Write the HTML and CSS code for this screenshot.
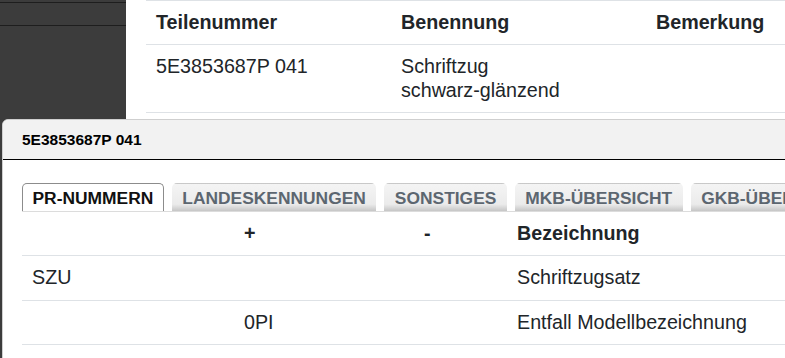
FILE: index.html
```html
<!DOCTYPE html>
<html lang="de">
<head>
<meta charset="utf-8">
<title>Teile</title>
<link rel="stylesheet" href="styles.css">
</head>
<body>
<div class="page">
  <aside class="sidebar">
    <div class="sb-bar"></div>
  </aside>
  <main class="content">
    <table class="parts">
      <colgroup><col class="c1"><col class="c2"><col class="c3"></colgroup>
      <thead>
        <tr><th>Teilenummer</th><th>Benennung</th><th>Bemerkung</th></tr>
      </thead>
      <tbody>
        <tr><td>5E3853687P 041</td><td>Schriftzug<br>schwarz-glänzend</td><td></td></tr>
      </tbody>
    </table>
  </main>
</div>

<div class="modal">
  <div class="modal-header">5E3853687P 041</div>
  <div class="modal-body">
    <ul class="tabs">
      <li class="tab active">PR-NUMMERN</li>
      <li class="tab">LANDESKENNUNGEN</li>
      <li class="tab">SONSTIGES</li>
      <li class="tab">MKB-ÜBERSICHT</li>
      <li class="tab">GKB-ÜBERSICHT</li>
    </ul>
    <table class="pr">
      <colgroup><col class="p1"><col class="p2"><col class="p3"><col class="p4"></colgroup>
      <thead>
        <tr><th></th><th>+</th><th>-</th><th>Bezeichnung</th></tr>
      </thead>
      <tbody>
        <tr><td>SZU</td><td></td><td></td><td>Schriftzugsatz</td></tr>
        <tr><td></td><td>0PI</td><td></td><td>Entfall Modellbezeichnung</td></tr>
      </tbody>
    </table>
  </div>
</div>
</body>
</html>
```
FILE: styles.css
```css
html, body {
  margin: 0;
  padding: 0;
  overflow: hidden;
  background: #fff;
  font-family: "Liberation Sans", Arial, sans-serif;
  color: #212529;
}

.page {
  display: flex;
  height: 358px;
}

.sidebar {
  width: 126px;
  flex: 0 0 126px;
  background: #3c3c3c;
}

.sb-bar {
  margin-top: 2px;
  height: 22px;
  border-top: 1px solid #1e1e1e;
  border-bottom: 1px solid #1e1e1e;
}

.content {
  flex: 1;
  padding-left: 20px;
}

table {
  border-collapse: collapse;
  table-layout: fixed;
  font-size: 19.7px;
  line-height: 23.4px;
}

.parts {
  width: 720px;
}

.parts .c1 { width: 245px; }
.parts .c2 { width: 255px; }
.parts .c3 { width: 220px; }

th, td {
  text-align: left;
  padding: 10px 10px;
  vertical-align: top;
}

th {
  font-weight: bold;
}

.parts th {
  border-top: 1px solid #dee2e6;
  border-bottom: 1px solid #dee2e6;
}

.parts td {
  border-bottom: 1px solid #dee2e6;
}

/* Modal overlay */
.modal {
  position: absolute;
  top: 119px;
  left: 2px;
  width: 820px;
  height: 260px;
  background: #fff;
  border: 1px solid #cfcfcf;
  border-radius: 6px 6px 0 0;
  overflow: hidden;
}

.modal-header {
  height: 39px;
  background: #f2f2f2;
  border-bottom: 1px solid #000;
  padding-left: 19px;
  font-size: 15.5px;
  font-weight: bold;
  color: #000;
  line-height: 39px;
}

.modal-body {
  padding: 23px 0 0 19px;
}

.tabs {
  list-style: none;
  margin: 0;
  padding: 0;
  display: flex;
  gap: 8px;
  border-bottom: 1px solid #dcdcdc;
  white-space: nowrap;
}

.tab {
  height: 27px;
  line-height: 28px;
  padding: 0 9.5px;
  font-size: 17.4px;
  font-weight: bold;
  color: #5c6670;
  border-radius: 5px 5px 0 0;
  background: linear-gradient(#f4f4f4 0%, #ebebeb 75%, #c6c6c6 100%);
  border: 1px solid transparent;
  border-bottom: none;
}

.tab.active {
  background: #fff;
  color: #111;
  border: 1px solid #8c8c8c;
  border-bottom: none;
}

.pr {
  width: 800px;
}

.pr .p1 { width: 212px; }
.pr .p2 { width: 180px; }
.pr .p3 { width: 93px; }
.pr .p4 { width: 315px; }

.pr th, .pr td {
  border-bottom: 1px solid #dee2e6;
}
```
